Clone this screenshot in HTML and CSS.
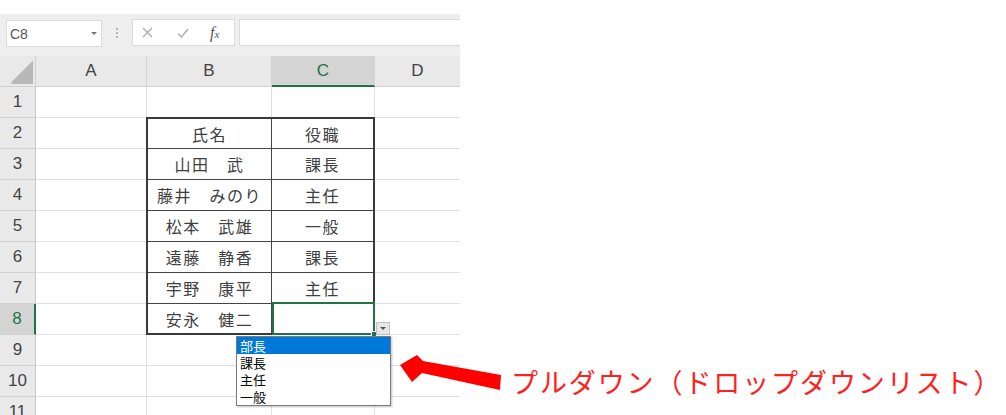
FILE: index.html
```html
<!DOCTYPE html>
<html lang="ja">
<head>
<meta charset="utf-8">
<link rel="stylesheet" href="styles.css">
</head>
<body>
<div class="excel">
  <div class="fbar">
    <div class="namebox"><span>C8</span><span class="caret"></span></div>
    <div class="dots"><i class="dot"></i><i class="dot"></i><i class="dot"></i></div>
    <div class="fxbox">
      <svg class="ic-x" width="11" height="11" viewBox="0 0 11 11"><path d="M1 1L10 10M10 1L1 10" stroke="#a9a9a9" stroke-width="1.3" fill="none"/></svg>
      <svg class="ic-ok" width="12" height="10" viewBox="0 0 12 10"><path d="M1 5.5L4.5 9L11 1" stroke="#a9a9a9" stroke-width="1.3" fill="none"/></svg>
      <span class="fx">f<small>x</small></span>
    </div>
    <div class="input"></div>
  </div>
  <div class="sheet">
    <div class="hd corner"></div>
    <div class="hd">A</div>
    <div class="hd">B</div>
    <div class="hd sel-h">C</div>
    <div class="hd d">D</div>

    <div class="hd rh">1</div><div class="c"></div><div class="c"></div><div class="c"></div><div class="c d"></div>
    <div class="hd rh">2</div><div class="c"></div><div class="c d"></div>
    <div class="hd rh">3</div><div class="c"></div><div class="c d"></div>
    <div class="hd rh">4</div><div class="c"></div><div class="c d"></div>
    <div class="hd rh">5</div><div class="c"></div><div class="c d"></div>
    <div class="hd rh">6</div><div class="c"></div><div class="c d"></div>
    <div class="hd rh">7</div><div class="c"></div><div class="c d"></div>
    <div class="hd rh sel-r">8</div><div class="c"></div><div class="c d"></div>
    <div class="hd rh">9</div><div class="c"></div><div class="c"></div><div class="c"></div><div class="c d"></div>
    <div class="hd rh">10</div><div class="c"></div><div class="c"></div><div class="c"></div><div class="c d"></div>
    <div class="hd rh">11</div><div class="c"></div><div class="c"></div><div class="c"></div><div class="c d"></div>

    <div class="tbl">
      <div class="n">氏名</div><div>役職</div>
      <div class="n">山田　武</div><div>課長</div>
      <div class="n">藤井　みのり</div><div>主任</div>
      <div class="n">松本　武雄</div><div>一般</div>
      <div class="n">遠藤　静香</div><div>課長</div>
      <div class="n">宇野　康平</div><div>主任</div>
      <div class="n last">安永　健二</div><div class="last"></div>
    </div>
  </div>
  <div class="sel"></div>
  <div class="handle"></div>
  <div class="ddbtn"><span class="caret dk"></span></div>
  <div class="list">
    <div class="item on">部長</div>
    <div class="item">課長</div>
    <div class="item">主任</div>
    <div class="item">一般</div>
  </div>
</div>
<svg class="arrow" width="106" height="45" viewBox="0 0 106 45"><polygon points="2,15 19,5 25,11 103,25 102,40 24,23 14,32" fill="#ff0000"/></svg>
<div class="label">プルダウン（ドロップダウンリスト）</div>
</body>
</html>
```
FILE: styles.css
```css
* { box-sizing: border-box; margin: 0; padding: 0; }
body {
  background: #fff;
  width: 1006px;
  height: 415px;
  overflow: hidden;
  position: relative;
  font-family: "Liberation Sans", Arial, sans-serif;
}
.excel {
  position: relative;
  margin-top: 14px;
  width: 460px;
  height: 401px;
  overflow: hidden;
  background: #fff;
}
.fbar {
  height: 42px;
  background: #eeeeee;
  display: flex;
  align-items: flex-start;
  padding-top: 5px;
}
.namebox {
  margin-left: 6px;
  margin-top: 1px;
  width: 96px;
  height: 27px;
  background: #fff;
  border: 1px solid #dcdcdc;
  display: flex;
  align-items: center;
  justify-content: space-between;
  padding: 0 4px 0 3px;
  font-size: 14px;
  color: #555;
}
.caret {
  width: 0;
  height: 0;
  border-left: 3px solid transparent;
  border-right: 3px solid transparent;
  border-top: 3px solid #777;
}
.caret.dk { border-top-color: #555; }
.dots {
  width: 30px;
  display: flex;
  flex-direction: column;
  align-items: center;
  gap: 2px;
  padding-top: 9px;
}
.dot { display: block; width: 2px; height: 2px; background: #b5b5b5; }
.fxbox {
  width: 103px;
  height: 27px;
  background: #fff;
  border: 1px solid #dcdcdc;
  display: flex;
  align-items: center;
  padding-left: 9px;
}
.ic-ok { margin-left: 24px; }
.fx {
  margin-left: 21px;
  font-family: "Liberation Serif", serif;
  font-style: italic;
  font-size: 16px;
  color: #555;
}
.fx small { font-size: 11px; }
.input {
  flex: 1;
  margin-left: 4px;
  height: 27px;
  background: #fff;
  border: 1px solid #dcdcdc;
  border-right: none;
}
.sheet {
  display: grid;
  grid-template-columns: 36px 111px 125px 103px 85px;
  grid-template-rows: repeat(12, 31px);
}
.hd {
  background: #e9e9e9;
  border-right: 1px solid #d2d2d2;
  border-bottom: 1px solid #d2d2d2;
  display: flex;
  align-items: center;
  justify-content: center;
  font-size: 17px;
  color: #444;
}
.hd.d { border-right: none; }
.rh { border-right-color: #c8c8c8; }
.corner { position: relative; }
.corner::after {
  content: "";
  position: absolute;
  right: 2px;
  bottom: 2px;
  width: 23px;
  height: 23px;
  background: linear-gradient(to bottom right, transparent 50%, #b8b8b8 50%);
}
.sel-h {
  background: #d4d4d4;
  color: #217346;
  border-bottom: 2px solid #217346;
}
.sel-r {
  background: #d4d4d4;
  color: #217346;
  border-right: 2px solid #217346;
}
.c {
  border-right: 1px solid #e1e1e1;
  border-bottom: 1px solid #e1e1e1;
}
.c.d { border-right: none; }
.tbl {
  grid-column: 3 / 5;
  grid-row: 3 / 10;
  margin: -1px 0 0 -1px;
  border: 2px solid #3a3a3a;
  background: #fff;
  display: grid;
  grid-template-columns: 124px 1fr;
  grid-template-rows: 30px repeat(5, 31px) 1fr;
}
.tbl div {
  display: flex;
  align-items: center;
  justify-content: center;
  font-family: "Noto Sans CJK JP", sans-serif;
  font-size: 16px;
  letter-spacing: 1.5px;
  color: #404040;
  border-bottom: 1px solid #444;
}
.tbl .n { border-right: 1px solid #444; }
.tbl .last { border-bottom: none; }
.sel {
  position: absolute;
  left: 272px;
  top: 288px;
  width: 103px;
  height: 33px;
  border: 2px solid #217346;
}
.handle {
  position: absolute;
  left: 371px;
  top: 317px;
  width: 6px;
  height: 6px;
  background: #217346;
  border: 1px solid #fff;
}
.ddbtn {
  position: absolute;
  left: 376px;
  top: 308px;
  width: 14px;
  height: 13px;
  background: #e6e6e6;
  border: 1px solid #c0c0c0;
  display: flex;
  align-items: center;
  justify-content: center;
}
.list {
  position: absolute;
  left: 236px;
  top: 322px;
  width: 155px;
  height: 70px;
  background: #fff;
  border: 1px solid #7a7a7a;
  box-shadow: 1px 1px 2px rgba(0, 0, 0, 0.25);
  font-family: "Noto Sans CJK JP", sans-serif;
  font-size: 13px;
}
.item {
  height: 17px;
  line-height: 17px;
  padding-left: 3px;
  color: #000;
  overflow: hidden;
}
.item.on { background: #0078d7; color: #fff; }
.arrow {
  position: absolute;
  left: 398px;
  top: 350px;
}
.label {
  position: absolute;
  left: 511px;
  top: 367px;
  font-family: "Noto Sans CJK JP", sans-serif;
  font-size: 27px;
  line-height: 30px;
  letter-spacing: 1.9px;
  color: #ff2020;
  white-space: nowrap;
}
```
